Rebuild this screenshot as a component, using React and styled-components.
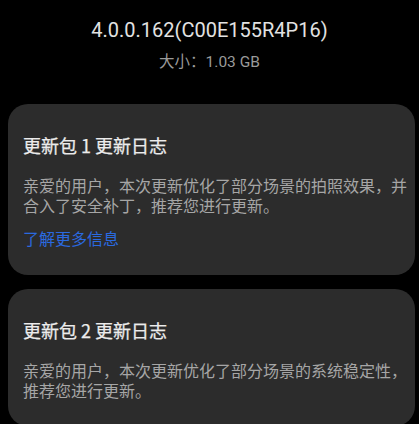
import styled, { createGlobalStyle } from "styled-components";

const GlobalStyle = createGlobalStyle`
  html, body {
    margin: 0;
    padding: 0;
    background: #000;
  }
  body {
    font-family: Roboto, "Noto Sans CJK SC", sans-serif;
  }
`;

const packages = [
  {
    name: "更新包 1 更新日志",
    text: "亲爱的用户，本次更新优化了部分场景的拍照效果，并合入了安全补丁，推荐您进行更新。",
    link: "了解更多信息",
  },
  {
    name: "更新包 2 更新日志",
    text: "亲爱的用户，本次更新优化了部分场景的系统稳定性，推荐您进行更新。",
  },
];

const App = () => {
  return (
    <Page>
      <GlobalStyle />
      <Header>
        <Version>4.0.0.162(C00E155R4P16)</Version>
        <Size>大小：1.03 GB</Size>
      </Header>
      <CardList>
        {packages.map((p) => (
          <Card key={p.name}>
            <CardTitle>{p.name}</CardTitle>
            <CardText>{p.text}</CardText>
            {p.link && <MoreLink href="#">{p.link}</MoreLink>}
          </Card>
        ))}
      </CardList>
    </Page>
  );
};

const Page = styled.div`
  min-height: 100vh;
  background: #000;
  overflow: hidden;
`;

const Header = styled.div`
  display: flex;
  flex-direction: column;
  align-items: center;
  padding-top: 16px;
  gap: 8px;
`;

const Version = styled.div`
  font-family: Roboto, "Noto Sans CJK SC", sans-serif;
  font-size: 20px;
  line-height: 28px;
  color: #e2e2e2;
`;

const Size = styled.div`
  font-family: Roboto, "Noto Sans CJK SC", sans-serif;
  font-size: 15.5px;
  line-height: 20px;
  color: #9a9a9a;
`;

const CardList = styled.div`
  display: flex;
  flex-direction: column;
  gap: 14px;
  padding: 32px 4px 0 8px;
`;

const Card = styled.div`
  display: flex;
  flex-direction: column;
  background: #2c2c2c;
  border-radius: 20px;
  padding: 29px 7px 26px 15px;
`;

const CardTitle = styled.div`
  font-family: "Noto Sans CJK SC", sans-serif;
  font-size: 18px;
  font-weight: 400;
  line-height: 24px;
  color: #ececec;
  -webkit-text-stroke: 0.25px #ececec;
`;

const CardText = styled.div`
  margin-top: 19px;
  font-family: "Noto Sans CJK SC", sans-serif;
  font-size: 16px;
  line-height: 19.5px;
  color: #a6a6a6;
`;

const MoreLink = styled.a`
  margin-top: 12px;
  font-family: "Noto Sans CJK SC", sans-serif;
  font-size: 16px;
  line-height: 22px;
  color: #2a6ae0;
  text-decoration: none;
`;

export default App;
